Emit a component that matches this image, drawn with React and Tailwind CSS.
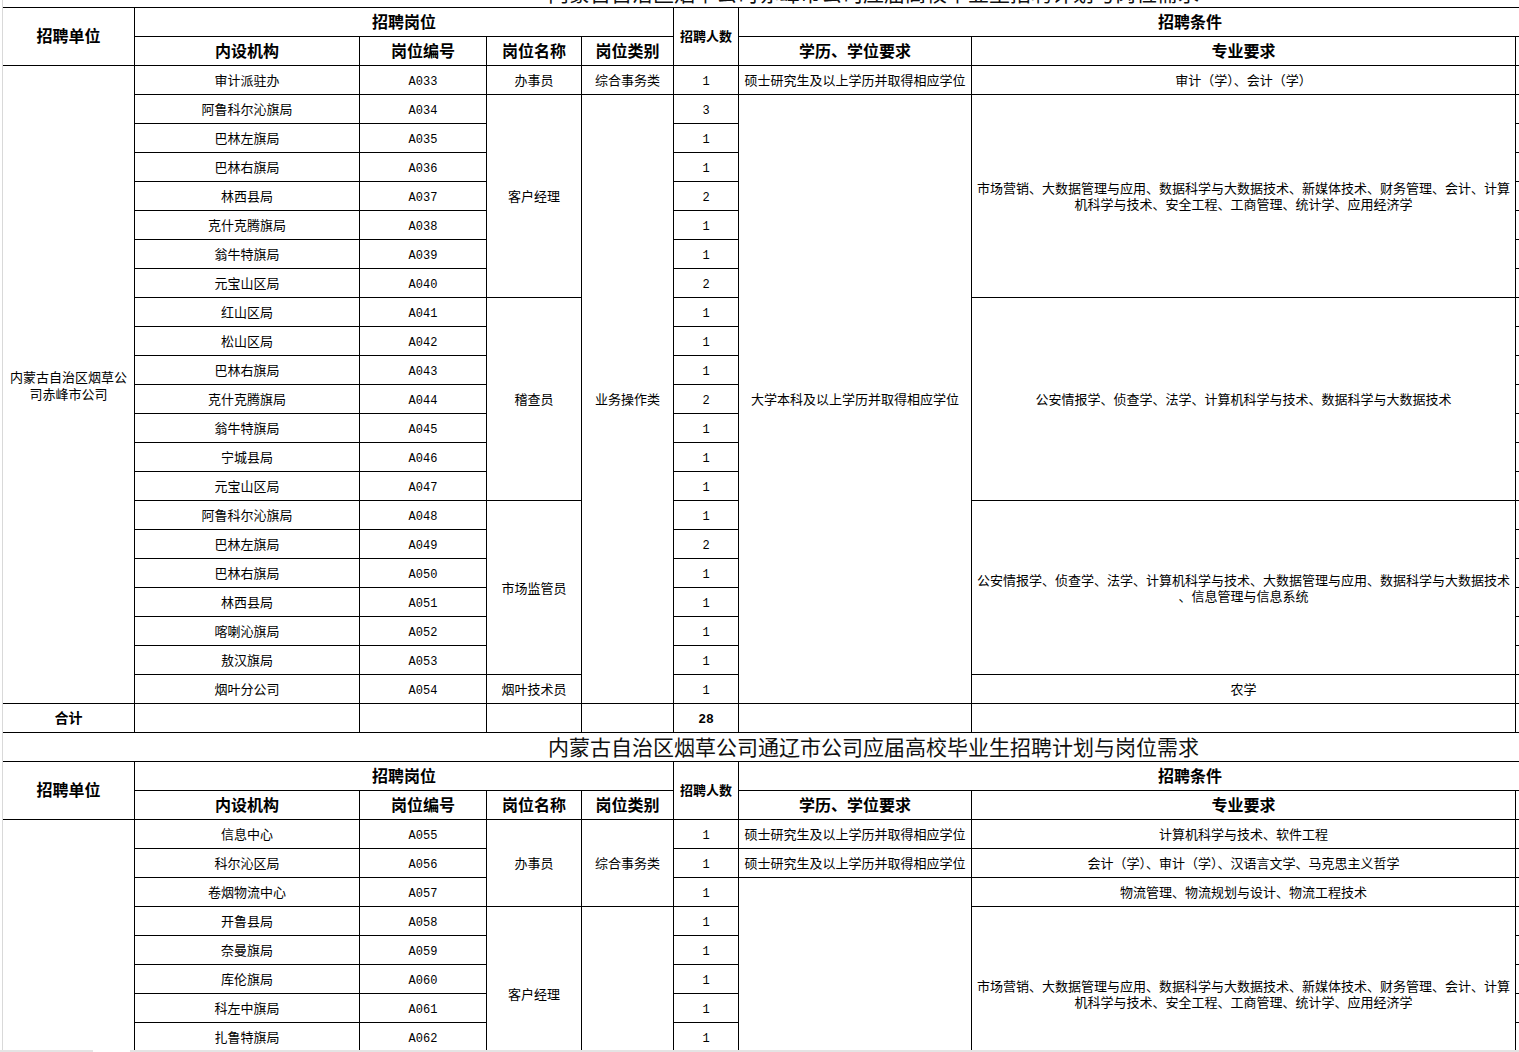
import React from "react";

function H({ children, cls = "text-[16px]" }) {
  return (
    <div className={"border-r border-b border-black flex items-center justify-center text-center font-bold pt-[3px] whitespace-nowrap " + cls}>
      {children}
    </div>
  );
}

function T({ children, cls = "" }) {
  return (
    <div className={"border-r border-b border-black flex items-center justify-center text-center text-[13px] leading-[16px] pt-[4px] " + cls}>
      {children}
    </div>
  );
}

function N({ children, cls = "text-[12px]" }) {
  return (
    <div className={"border-r border-b border-black flex items-center justify-center text-center pt-[4px] " + cls}>
      {children}
    </div>
  );
}

function X() {
  return <div className="border-b border-black" />;
}

function Title({ children }) {
  return (
    <div className="col-span-9 border-b border-black flex items-center pl-[545px] text-[21px] text-[#111] font-['Noto_Sans_CJK_SC',sans-serif]">
      {children}
    </div>
  );
}

function Header() {
  return (
    <>
      <H cls="row-span-2 text-[16px]">招聘单位</H>
      <H cls="col-span-4 text-[16px]">招聘岗位</H>
      <H cls="row-span-2 text-[13px]">招聘人数</H>
      <div className="col-span-3 border-b border-black flex items-center justify-center font-bold pt-[3px] pl-[122px] text-[16px]">
        招聘条件
      </div>
      <H>内设机构</H>
      <H>岗位编号</H>
      <H>岗位名称</H>
      <H>岗位类别</H>
      <H>学历、学位要求</H>
      <H>专业要求</H>
      <X />
    </>
  );
}

const LONG1 = (
  <>
    市场营销、大数据管理与应用、数据科学与大数据技术、新媒体技术、财务管理、会计、计算
    <br />
    机科学与技术、安全工程、工商管理、统计学、应用经济学
  </>
);

const t1 = [
  ["阿鲁科尔沁旗局", "A034", "3"],
  ["巴林左旗局", "A035", "1"],
  ["巴林右旗局", "A036", "1"],
  ["林西县局", "A037", "2"],
  ["克什克腾旗局", "A038", "1"],
  ["翁牛特旗局", "A039", "1"],
  ["元宝山区局", "A040", "2"],
  ["红山区局", "A041", "1"],
  ["松山区局", "A042", "1"],
  ["巴林右旗局", "A043", "1"],
  ["克什克腾旗局", "A044", "2"],
  ["翁牛特旗局", "A045", "1"],
  ["宁城县局", "A046", "1"],
  ["元宝山区局", "A047", "1"],
  ["阿鲁科尔沁旗局", "A048", "1"],
  ["巴林左旗局", "A049", "2"],
  ["巴林右旗局", "A050", "1"],
  ["林西县局", "A051", "1"],
  ["喀喇沁旗局", "A052", "1"],
  ["敖汉旗局", "A053", "1"],
  ["烟叶分公司", "A054", "1"],
];

const t2 = [
  ["开鲁县局", "A058", "1"],
  ["奈曼旗局", "A059", "1"],
  ["库伦旗局", "A060", "1"],
  ["科左中旗局", "A061", "1"],
  ["扎鲁特旗局", "A062", "1"],
];

export default function App() {
  return (
    <div className="relative w-[1519px] h-[1052px] overflow-hidden bg-white text-black font-['Liberation_Mono','Noto_Sans_CJK_SC',monospace]">
      <div className="-mt-[21px] ml-[2px] border-l border-[#d9d9d9] grid grid-cols-[132px_225px_127px_95px_92px_65px_233px_544px_1fr] auto-rows-[29px]">
        <Title>内蒙古自治区烟草公司赤峰市公司应届高校毕业生招聘计划与岗位需求</Title>
        <Header />

        {/* first data row */}
        <T cls="row-span-22 leading-[17px]">
          内蒙古自治区烟草公
          <br />
          司赤峰市公司
        </T>
        <T>审计派驻办</T>
        <N>A033</N>
        <T>办事员</T>
        <T>综合事务类</T>
        <N>1</N>
        <T>硕士研究生及以上学历并取得相应学位</T>
        <T>审计（学）、会计（学）</T>
        <X />

        {t1.map((r, i) => (
          <React.Fragment key={r[1]}>
            <T>{r[0]}</T>
            <N>{r[1]}</N>
            {i === 0 && <T cls="row-span-7">客户经理</T>}
            {i === 0 && <T cls="row-span-21">业务操作类</T>}
            {i === 7 && <T cls="row-span-7">稽查员</T>}
            {i === 14 && <T cls="row-span-6">市场监管员</T>}
            {i === 20 && <T>烟叶技术员</T>}
            <N>{r[2]}</N>
            {i === 0 && <T cls="row-span-21">大学本科及以上学历并取得相应学位</T>}
            {i === 0 && <T cls="row-span-7">{LONG1}</T>}
            {i === 7 && (
              <T cls="row-span-7">公安情报学、侦查学、法学、计算机科学与技术、数据科学与大数据技术</T>
            )}
            {i === 14 && (
              <T cls="row-span-6">
                公安情报学、侦查学、法学、计算机科学与技术、大数据管理与应用、数据科学与大数据技术
                <br />
                、信息管理与信息系统
              </T>
            )}
            {i === 20 && <T>农学</T>}
            <X />
          </React.Fragment>
        ))}

        <H cls="text-[14px]">合计</H>
        <T />
        <T />
        <T />
        <T />
        <N cls="font-bold text-[13px]">28</N>
        <T />
        <T />
        <X />

        <Title>内蒙古自治区烟草公司通辽市公司应届高校毕业生招聘计划与岗位需求</Title>
        <Header />

        <T cls="row-span-9" />
        <T>信息中心</T>
        <N>A055</N>
        <T cls="row-span-3">办事员</T>
        <T cls="row-span-3">综合事务类</T>
        <N>1</N>
        <T>硕士研究生及以上学历并取得相应学位</T>
        <T>计算机科学与技术、软件工程</T>
        <X />

        <T>科尔沁区局</T>
        <N>A056</N>
        <N>1</N>
        <T>硕士研究生及以上学历并取得相应学位</T>
        <T>会计（学）、审计（学）、汉语言文学、马克思主义哲学</T>
        <X />

        <T>卷烟物流中心</T>
        <N>A057</N>
        <N>1</N>
        <T cls="row-span-7" />
        <T>物流管理、物流规划与设计、物流工程技术</T>
        <X />

        {t2.map((r, i) => (
          <React.Fragment key={r[1]}>
            <T>{r[0]}</T>
            <N>{r[1]}</N>
            {i === 0 && <T cls="row-span-6">客户经理</T>}
            {i === 0 && <T cls="row-span-6" />}
            <N>{r[2]}</N>
            {i === 0 && <T cls="row-span-6">{LONG1}</T>}
            <X />
          </React.Fragment>
        ))}
      </div>

      <div className="absolute bottom-0 left-0 w-[93px] h-[2px] bg-[#e4e4e4]" />
      <div className="absolute bottom-0 left-[130px] right-0 h-[2px] bg-[#e4e4e4]" />
    </div>
  );
}
